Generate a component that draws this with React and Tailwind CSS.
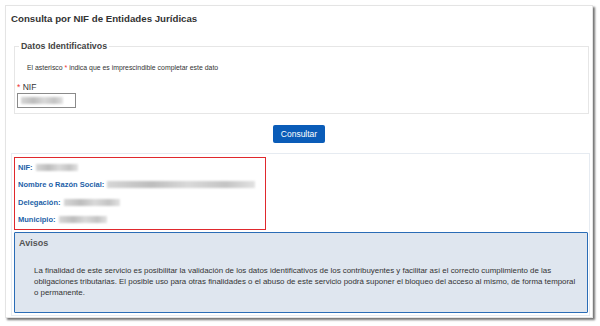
import React from "react";

const Blur = ({ w, className = "" }) => (
  <span
    className={`inline-block h-[7px] align-middle bg-[linear-gradient(90deg,#d6d6d6,#bdbdbd_30%,#d9d9d9_55%,#c4c4c4_80%,#e2e2e2)] blur-[0.8px] ${className}`}
    style={{ width: w }}
  />
);

const Campo = ({ label, w }) => (
  <div className="flex items-center gap-[3px] h-[17.3px] whitespace-nowrap">
    <span className="shrink-0 font-bold text-[#1d5fa8]">{label}</span>
    <Blur w={w} className="shrink-0" />
  </div>
);

export default function App() {
  return (
    <div className="w-[600px] h-[326px] bg-white pt-[5px] pl-[5px] font-['Liberation_Sans',Arial,sans-serif]">
      <div className="w-[588px] h-[313px] bg-white border border-[#e4e4e4] shadow-[2px_2px_2px_rgba(0,0,0,0.55)] flex flex-col">
        <h1 className="ml-[5px] mt-[6px] text-[9.7px] leading-[14px] font-bold text-[#333]">
          Consulta por NIF de Entidades Jurídicas
        </h1>

        <fieldset className="ml-[8px] mt-[13px] w-[575px] h-[75px] border border-[#e6e6e6] px-[2px]">
          <legend className="ml-[2px] px-[2px] text-[8.8px] leading-[14px] font-bold text-[#444]">
            Datos Identificativos
          </legend>
          <p className="ml-[10px] mt-[10px] text-[6.9px] leading-[10px] text-[#333]">
            El asterisco <span className="text-[#e33]">*</span> indica que es imprescindible completar este dato
          </p>
          <div className="mt-[9px] text-[8.5px] leading-[10px] text-[#333]">
            <span className="text-[#e33]">*</span> NIF
          </div>
          <div className="mt-[1px] w-[59px] h-[15px] border border-[#8a8a8a] flex items-center pl-[3px]">
            <Blur w={42} />
          </div>
        </fieldset>

        <div className="flex justify-center mt-[11px]">
          <button className="w-[52px] h-[18px] rounded-[2px] bg-[#0a5cb8] text-white text-[8.5px] leading-[18px]">
            Consultar
          </button>
        </div>

        <div className="ml-[5px] mt-[10px] w-[579px] h-[163px] border border-[#e6ebf1] pt-[3px] pl-[2px]">
          <div className="w-[252px] h-[73px] border-[1.5px] border-[#e0282d] pl-[3px] pt-[1px] text-[7.5px]">
            <Campo label="NIF:" w={42} />
            <Campo label="Nombre o Razón Social:" w={148} />
            <Campo label="Delegación:" w={56} />
            <Campo label="Municipio:" w={48} />
          </div>
          <div className="mt-[2px] w-[574px] h-[81px] bg-[#dfe6ef] border-[1.5px] border-[#2a6cb6] rounded-[1px]">
            <div className="ml-[4px] mt-[3px] text-[9px] leading-[14px] font-bold text-[#555]">
              Avisos
            </div>
            <p className="ml-[19px] mt-[15px] w-[546px] text-[7.9px] leading-[11px] text-[#333]">
              La finalidad de este servicio es posibilitar la validación de los datos identificativos de los contribuyentes y facilitar así el correcto cumplimiento de las obligaciones tributarias. El posible uso para otras finalidades o el abuso de este servicio podrá suponer el bloqueo del acceso al mismo, de forma temporal o permanente.
            </p>
          </div>
        </div>
      </div>
    </div>
  );
}
